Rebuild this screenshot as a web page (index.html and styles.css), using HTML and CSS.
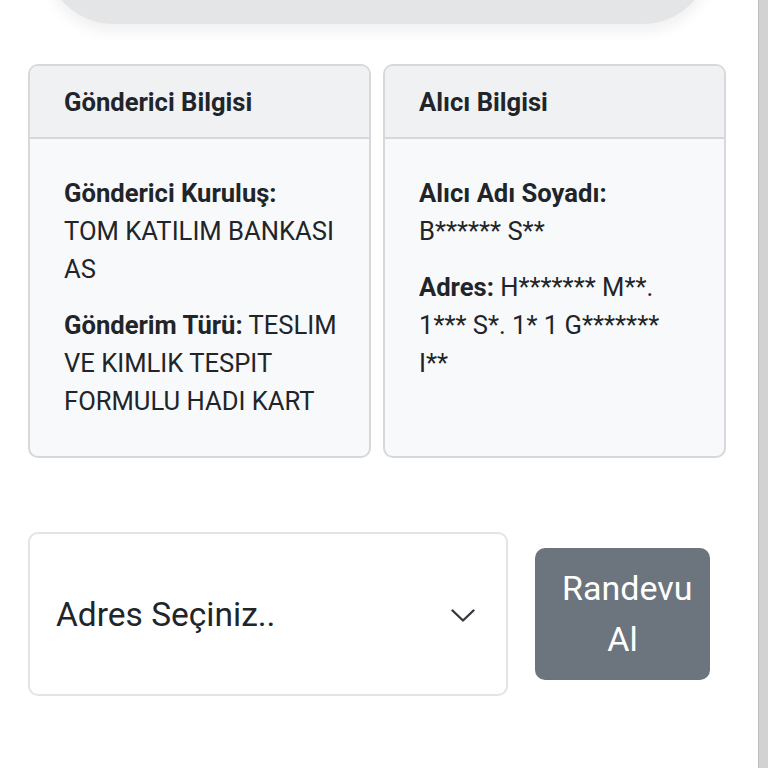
FILE: index.html
```html
<!DOCTYPE html>
<html lang="tr">
<head>
<meta charset="utf-8">
<title>Gönderi Bilgisi</title>
<link rel="stylesheet" href="styles.css">
</head>
<body>
<div class="page">
  <main class="main">
    <div class="top-panel"></div>
    <section class="cards">
      <div class="card">
        <div class="card-header">Gönderici Bilgisi</div>
        <div class="card-body">
          <p><strong>Gönderici Kuruluş:</strong><br>TOM KATILIM BANKASI<br>AS</p>
          <p><strong>Gönderim Türü:</strong> TESLIM<br>VE KIMLIK TESPIT<br>FORMULU HADI KART</p>
        </div>
      </div>
      <div class="card">
        <div class="card-header">Alıcı Bilgisi</div>
        <div class="card-body">
          <p><strong>Alıcı Adı Soyadı:</strong><br>B****** S**</p>
          <p><strong>Adres:</strong> H******* M**.<br>1*** S*. 1* 1 G*******<br>I**</p>
        </div>
      </div>
    </section>
    <section class="actions">
      <div class="select">
        <span class="select-text">Adres Seçiniz..</span>
        <svg class="chevron" width="24" height="13" viewBox="0 0 24 13"><polyline points="1.5,1.5 12,11.5 22.5,1.5" fill="none" stroke="#343a40" stroke-width="2.4" stroke-linecap="round" stroke-linejoin="round"/></svg>
      </div>
      <button class="btn">Randevu Al</button>
    </section>
  </main>
  <div class="scrollbar"></div>
</div>
</body>
</html>
```
FILE: styles.css
```css
* { box-sizing: border-box; }
html, body { margin: 0; padding: 0; background: #fff; }
body {
  font-family: Roboto, "Liberation Sans", sans-serif;
  color: #212529;
}
.page {
  display: flex;
  width: 768px;
  height: 768px;
  overflow: hidden;
}
.main {
  flex: 1;
  padding: 0 32px 0 28px;
}
.top-panel {
  height: 84px;
  margin: -60px 14px 0 16px;
  background: #e4e5e7;
  border-radius: 0 0 70px 70px;
  box-shadow: 0 8px 14px rgba(0, 0, 0, 0.06);
}
.cards {
  display: flex;
  gap: 12px;
  margin-top: 40px;
}
.card {
  width: 343px;
  border: 2px solid #d6d8db;
  border-radius: 10px;
  background: #f8f9fa;
  overflow: hidden;
}
.card-header {
  background: #f0f1f3;
  border-bottom: 2px solid #d6d8db;
  padding: 17px 34px 16px;
  font-size: 25.6px;
  line-height: 38px;
  font-weight: 700;
}
.card-body {
  padding: 35px 34px 36px;
  font-size: 25.6px;
  line-height: 38px;
  white-space: nowrap;
}
.card-body p { margin: 0 0 18px; }
.card-body p:last-child { margin-bottom: 0; }
.card-body strong { font-weight: 700; }
.actions {
  display: flex;
  align-items: center;
  gap: 27px;
  margin-top: 74px;
}
.select {
  width: 480px;
  height: 164px;
  border: 2px solid #e2e4e7;
  border-radius: 10px;
  background: #fff;
  display: flex;
  align-items: center;
  justify-content: space-between;
  padding: 0 31px 0 26px;
}
.select-text {
  font-size: 33.5px;
  color: #212529;
}
.chevron { display: block; margin-top: 2px; }
.btn {
  width: 175px;
  padding: 15px 27px;
  border: none;
  border-radius: 10px;
  background: #6c757d;
  color: #fff;
  font-family: Roboto, "Liberation Sans", sans-serif;
  font-size: 34px;
  line-height: 51px;
  text-align: center;
}
.scrollbar {
  width: 10px;
  flex: none;
  background: #d2d2d2;
  border-left: 1px solid #bdbdbd;
}
```
